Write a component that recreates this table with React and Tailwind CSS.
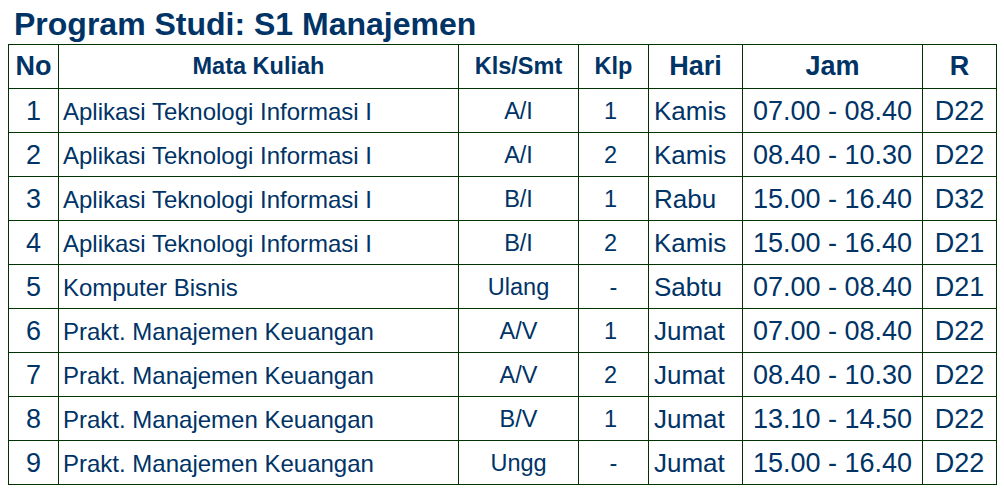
import React from "react";

const rows = [
  ["1", "Aplikasi Teknologi Informasi I", "A/I", "1", "Kamis", "07.00 - 08.40", "D22"],
  ["2", "Aplikasi Teknologi Informasi I", "A/I", "2", "Kamis", "08.40 - 10.30", "D22"],
  ["3", "Aplikasi Teknologi Informasi I", "B/I", "1", "Rabu", "15.00 - 16.40", "D32"],
  ["4", "Aplikasi Teknologi Informasi I", "B/I", "2", "Kamis", "15.00 - 16.40", "D21"],
  ["5", "Komputer Bisnis", "Ulang", "-", "Sabtu", "07.00 - 08.40", "D21"],
  ["6", "Prakt. Manajemen Keuangan", "A/V", "1", "Jumat", "07.00 - 08.40", "D22"],
  ["7", "Prakt. Manajemen Keuangan", "A/V", "2", "Jumat", "08.40 - 10.30", "D22"],
  ["8", "Prakt. Manajemen Keuangan", "B/V", "1", "Jumat", "13.10 - 14.50", "D22"],
  ["9", "Prakt. Manajemen Keuangan", "Ungg", "-", "Jumat", "15.00 - 16.40", "D22"],
];

const cell = "bg-white h-[43px] flex items-center whitespace-nowrap";

export default function App() {
  return (
    <div
      className="bg-white w-[1004px] h-[495px] pt-[6px] text-[#003366]"
      style={{ fontFamily: '"Liberation Sans", Arial, sans-serif' }}
    >
      <div className="pl-[14px] h-[36px] leading-[36px] text-[32px] font-bold">
        Program Studi: S1 Manajemen
      </div>
      <div className="ml-[8px] mt-[2px] w-[989px] grid grid-cols-[49px_399px_119px_69px_93px_179px_73px] gap-px p-px bg-[#003300]">
        <div className={`${cell} justify-center font-bold text-[27px]`}>No</div>
        <div className={`${cell} justify-center font-bold text-[23.5px]`}>Mata Kuliah</div>
        <div className={`${cell} justify-center font-bold text-[23.5px]`}>Kls/Smt</div>
        <div className={`${cell} justify-center font-bold text-[23.5px]`}>Klp</div>
        <div className={`${cell} justify-center font-bold text-[27px]`}>Hari</div>
        <div className={`${cell} justify-center font-bold text-[27px]`}>Jam</div>
        <div className={`${cell} justify-center font-bold text-[27px]`}>R</div>
        {rows.map((r) => (
          <React.Fragment key={r[0]}>
            <div className={`${cell} justify-center text-[27px] pt-[2px]`}>{r[0]}</div>
            <div className={`${cell} pl-[4px] text-[24px] pt-[2px]`}>{r[1]}</div>
            <div className={`${cell} justify-center text-[23.5px] pt-[2px]`}>{r[2]}</div>
            <div className={`${cell} justify-center text-[23.5px] pt-[2px] ${r[3] === "-" ? "" : "pr-[6px]"}`}>{r[3]}</div>
            <div className={`${cell} pl-[5px] text-[26px] pt-[2px]`}>{r[4]}</div>
            <div className={`${cell} justify-center text-[27px] pt-[2px]`}>{r[5]}</div>
            <div className={`${cell} justify-center text-[27px] pt-[2px]`}>{r[6]}</div>
          </React.Fragment>
        ))}
      </div>
    </div>
  );
}
